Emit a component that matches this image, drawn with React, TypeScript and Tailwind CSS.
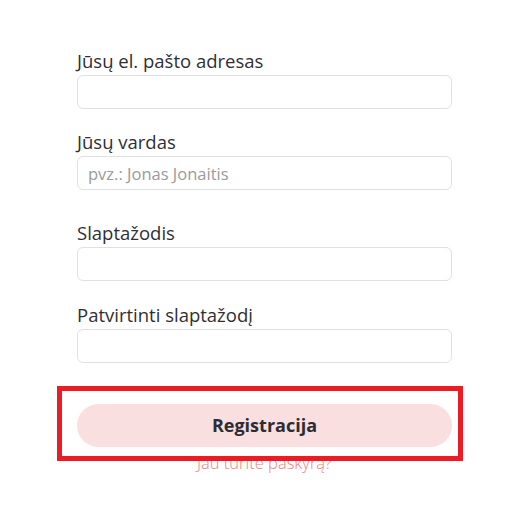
const FIELDS = [
  { label: 'Jūsų el. pašto adresas', type: 'email', placeholder: '', gap: 'mt-[50px]' },
  { label: 'Jūsų vardas', type: 'text', placeholder: 'pvz.: Jonas Jonaitis', gap: 'mt-[22px]' },
  { label: 'Slaptažodis', type: 'password', placeholder: '', gap: 'mt-[32px]' },
  { label: 'Patvirtinti slaptažodį', type: 'password', placeholder: '', gap: 'mt-[23px]' },
]

export default function App() {
  return (
    <div className="relative min-h-[528px] w-[517px] bg-white font-['Open_Sans',sans-serif] text-[#2f2f33]">
      <form className="ml-[77px] flex w-[375px] flex-col" onSubmit={(e) => e.preventDefault()}>
        {FIELDS.map((f) => (
          <label key={f.label} className={`${f.gap} flex flex-col`}>
            <span className="text-[18.5px] leading-[22px]">{f.label}</span>
            <input
              type={f.type}
              placeholder={f.placeholder}
              className="mt-[3px] h-[34px] rounded-md border border-[#e1e1e1] bg-white px-[10px] text-[16.5px] text-[#333] outline-none placeholder:text-[#9b9b9b]"
            />
          </label>
        ))}

        <button
          type="submit"
          className="mt-[41px] h-[43px] rounded-full bg-[#f9dfdf] text-[18px] font-bold text-[#2c2c34]"
        >
          Registracija
        </button>
        <a href="#" className="mt-[7px] self-center text-[16.5px] font-light leading-[18px] text-[#f07e80]">
          Jau turite paskyrą?
        </a>
      </form>

      {/* annotation frame over the submit button */}
      <div className="pointer-events-none absolute left-[57px] top-[386px] h-[75px] w-[406px] border-[5px] border-[#ec1c24]" />
    </div>
  )
}
